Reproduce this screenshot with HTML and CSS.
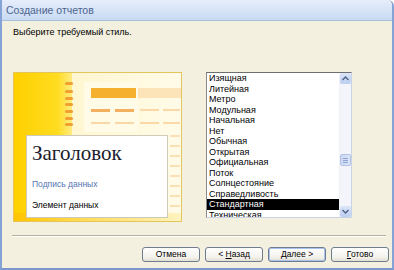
FILE: index.html
```html
<!DOCTYPE html>
<html lang="ru">
<head>
  <meta charset="UTF-8">
  <title>Создание отчетов</title>
  <link rel="stylesheet" href="styles.css">
</head>
<body>
  <div class="window">
    <header class="titlebar">Создание отчетов</header>

    <div class="content">
      <p class="prompt">Выберите требуемый стиль.</p>

      <div class="main">
        <div class="preview">
          <svg class="preview-art" width="167" height="148" viewBox="0 0 167 148">
            <defs>
              <linearGradient id="strip" x1="0" x2="1" y1="0" y2="0">
                <stop offset="0" stop-color="#ffd000"/>
                <stop offset="0.75" stop-color="#ffdc20"/>
                <stop offset="1" stop-color="#ffeb80"/>
              </linearGradient>
              <linearGradient id="fade" x1="0" x2="1" y1="0" y2="0">
                <stop offset="0" stop-color="#fff4c4"/>
                <stop offset="1" stop-color="#fffbe8"/>
              </linearGradient>
              <linearGradient id="floor" x1="0" x2="1" y1="0" y2="0">
                <stop offset="0" stop-color="#ffc400"/>
                <stop offset="0.35" stop-color="#ffd84a"/>
                <stop offset="1" stop-color="#fff3c0"/>
              </linearGradient>
            </defs>
            <rect width="167" height="148" fill="url(#fade)"/>
            <rect width="58" height="148" fill="url(#strip)"/>
            <rect x="70" y="9" width="54" height="50" fill="#fffbe6"/>
            <rect x="77" y="15" width="45" height="10" fill="#f5b030"/>
            <rect x="124" y="15" width="43" height="10" fill="#fde3b8"/>
            <g fill="#f0a030">
              <rect x="51" y="9" width="8" height="3" rx="1.5"/>
              <rect x="51" y="17" width="8" height="3" rx="1.5"/>
              <rect x="51" y="24" width="8" height="3" rx="1.5"/>
              <rect x="51" y="30" width="8" height="3" rx="1.5"/>
              <rect x="51" y="37" width="8" height="3" rx="1.5"/>
              <rect x="51" y="44" width="8" height="3" rx="1.5"/>
              <rect x="51" y="50" width="8" height="3" rx="1.5"/>
            </g>
            <g fill="#f4b060">
              <rect x="77" y="36" width="19" height="3"/>
              <rect x="101" y="36" width="19" height="3"/>
            </g>
            <g fill="#fbd8a8">
              <rect x="126" y="36" width="19" height="2"/>
              <rect x="149" y="36" width="17" height="2"/>
              <rect x="77" y="49" width="19" height="2"/>
              <rect x="101" y="49" width="19" height="2"/>
              <rect x="126" y="49" width="19" height="2"/>
              <rect x="149" y="49" width="17" height="2"/>
            </g>
            <g fill="#fbe0b4">
              <rect x="156" y="62" width="10" height="2"/>
              <rect x="156" y="72" width="10" height="2"/>
              <rect x="156" y="82" width="10" height="2"/>
              <rect x="156" y="92" width="10" height="2"/>
              <rect x="156" y="102" width="10" height="2"/>
              <rect x="156" y="112" width="10" height="2"/>
              <rect x="156" y="122" width="10" height="2"/>
              <rect x="156" y="132" width="10" height="2"/>
            </g>
            <rect y="140" width="167" height="8" fill="url(#floor)"/>
          </svg>

          <div class="card">
            <div class="card-title">Заголовок</div>
            <div class="card-caption">Подпись данных</div>
            <div class="card-item">Элемент данных</div>
          </div>
        </div>

        <div class="listbox">
          <ul class="styles">
            <li>Изящная</li>
            <li>Литейная</li>
            <li>Метро</li>
            <li>Модульная</li>
            <li>Начальная</li>
            <li>Нет</li>
            <li>Обычная</li>
            <li>Открытая</li>
            <li>Официальная</li>
            <li>Поток</li>
            <li>Солнцестояние</li>
            <li>Справедливость</li>
            <li class="selected">Стандартная</li>
            <li>Техническая</li>
          </ul>
          <div class="scrollbar">
            <div class="sb-btn">
              <svg width="7" height="5" viewBox="0 0 7 5"><path d="M0.5 4 L3.5 1 L6.5 4" fill="none" stroke="#4d6185" stroke-width="1.4"/></svg>
            </div>
            <div class="sb-track">
              <div class="sb-thumb"><span></span><span></span><span></span></div>
            </div>
            <div class="sb-btn">
              <svg width="7" height="5" viewBox="0 0 7 5"><path d="M0.5 1 L3.5 4 L6.5 1" fill="none" stroke="#4d6185" stroke-width="1.4"/></svg>
            </div>
          </div>
        </div>
      </div>

      <div class="footer">
        <div class="separator"></div>
        <div class="buttons">
          <button class="btn">Отмена</button>
          <button class="btn">&lt; <u>Н</u>азад</button>
          <button class="btn default"><u>Д</u>алее &gt;</button>
          <button class="btn"><u>Г</u>отово</button>
        </div>
      </div>
    </div>
  </div>
</body>
</html>
```

FILE: styles.css
```css
html, body {
  margin: 0;
  padding: 0;
  height: 270px;
  background: #ffffff;
  font-family: "Liberation Sans", Arial, sans-serif;
}

.window {
  width: 394px;
  height: 270px;
  box-sizing: border-box;
  display: flex;
  flex-direction: column;
  border-left: 2px solid #86a3d6;
  border-right: 2px solid #86a3d6;
  border-bottom: 2px solid #7b98cc;
  border-radius: 0 6px 0 0;
  background: #f4f0df;
  overflow: hidden;
}

.titlebar {
  flex: none;
  height: 21px;
  box-sizing: border-box;
  padding: 4px 0 0 4px;
  font-size: 10.5px;
  color: #4e6590;
  background: linear-gradient(#e6eefb, #d3e2f6 60%, #c8daf3);
  border-bottom: 1px solid #aabfdc;
}

.content {
  flex: 1;
  display: flex;
  flex-direction: column;
  padding: 0 0 0 11px;
}

.prompt {
  flex: none;
  margin: 6px 0 0 0;
  font-size: 9px;
  line-height: 11px;
  color: #000;
}

.main {
  flex: none;
  display: flex;
  align-items: flex-start;
  margin-top: 34px;
}

.preview {
  position: relative;
  flex: none;
  width: 169px;
  height: 150px;
  box-sizing: border-box;
  border: 1px solid #e6c45c;
}

.preview-art {
  display: block;
}

.card {
  position: absolute;
  left: 12px;
  top: 62px;
  width: 142px;
  height: 83px;
  box-sizing: border-box;
  background: #ffffff;
  border: 1px solid #cfcab8;
  padding: 6px 0 0 5px;
}

.card-title {
  font-family: "Liberation Serif", "Times New Roman", serif;
  font-size: 21px;
  line-height: 22px;
  color: #1b1b2c;
}

.card-caption {
  margin-top: 15px;
  font-size: 8.5px;
  line-height: 10px;
  color: #5474b0;
}

.card-item {
  margin-top: 11px;
  font-size: 8.5px;
  line-height: 10px;
  color: #000;
}

.listbox {
  flex: none;
  display: flex;
  margin-left: 24px;
  width: 146px;
  height: 146px;
  box-sizing: border-box;
  background: #ffffff;
  border: 1px solid;
  border-color: #6e6e6e #c9d3e6 #c9d3e6 #8a8a8a;
  overflow: hidden;
}

.styles {
  flex: 1;
  margin: 0;
  padding: 0;
  list-style: none;
  font-size: 9px;
  line-height: 10.5px;
  color: #000;
}

.styles li {
  padding-left: 2px;
  white-space: nowrap;
}

.styles li.selected {
  background: #000;
  color: #fff;
}

.scrollbar {
  width: 11px;
  display: flex;
  flex-direction: column;
  background: #f3f5fb;
  border-left: 1px solid #eef1f8;
}

.sb-btn {
  height: 11px;
  display: flex;
  align-items: center;
  justify-content: center;
  background: linear-gradient(#dbe5f8, #bccdf0);
  border-radius: 2px;
}

.sb-track {
  flex: 1;
  position: relative;
}

.sb-thumb {
  position: absolute;
  left: 0;
  right: 0;
  top: 70px;
  height: 12px;
  background: linear-gradient(90deg, #cbd8f4, #dde6f9);
  border: 1px solid #b3c3e6;
  border-radius: 2px;
  box-sizing: border-box;
  display: flex;
  flex-direction: column;
  align-items: center;
  justify-content: center;
  gap: 1px;
}

.sb-thumb span {
  width: 5px;
  height: 1px;
  background: #8ea4d2;
}

.footer {
  flex: 1;
  display: flex;
  flex-direction: column;
  justify-content: flex-end;
  padding-bottom: 6px;
}

.separator {
  margin: 0 6px 0 -1px;
  height: 1px;
  background: #b5b09e;
  border-bottom: 1px solid #ffffff;
}

.buttons {
  display: flex;
  justify-content: flex-end;
  gap: 5px;
  margin-top: 10px;
  padding-right: 3px;
}

.btn {
  width: 58px;
  height: 15px;
  padding: 0;
  font-family: "Liberation Sans", Arial, sans-serif;
  font-size: 8.5px;
  line-height: 13px;
  color: #000;
  background: linear-gradient(#ffffff, #f3f2ec 70%, #e2dfd2);
  border: 1px solid #6f7b8f;
  border-radius: 3px;
}

.btn.default {
  box-shadow: inset 0 0 0 1px #a9c3ee;
}
```
